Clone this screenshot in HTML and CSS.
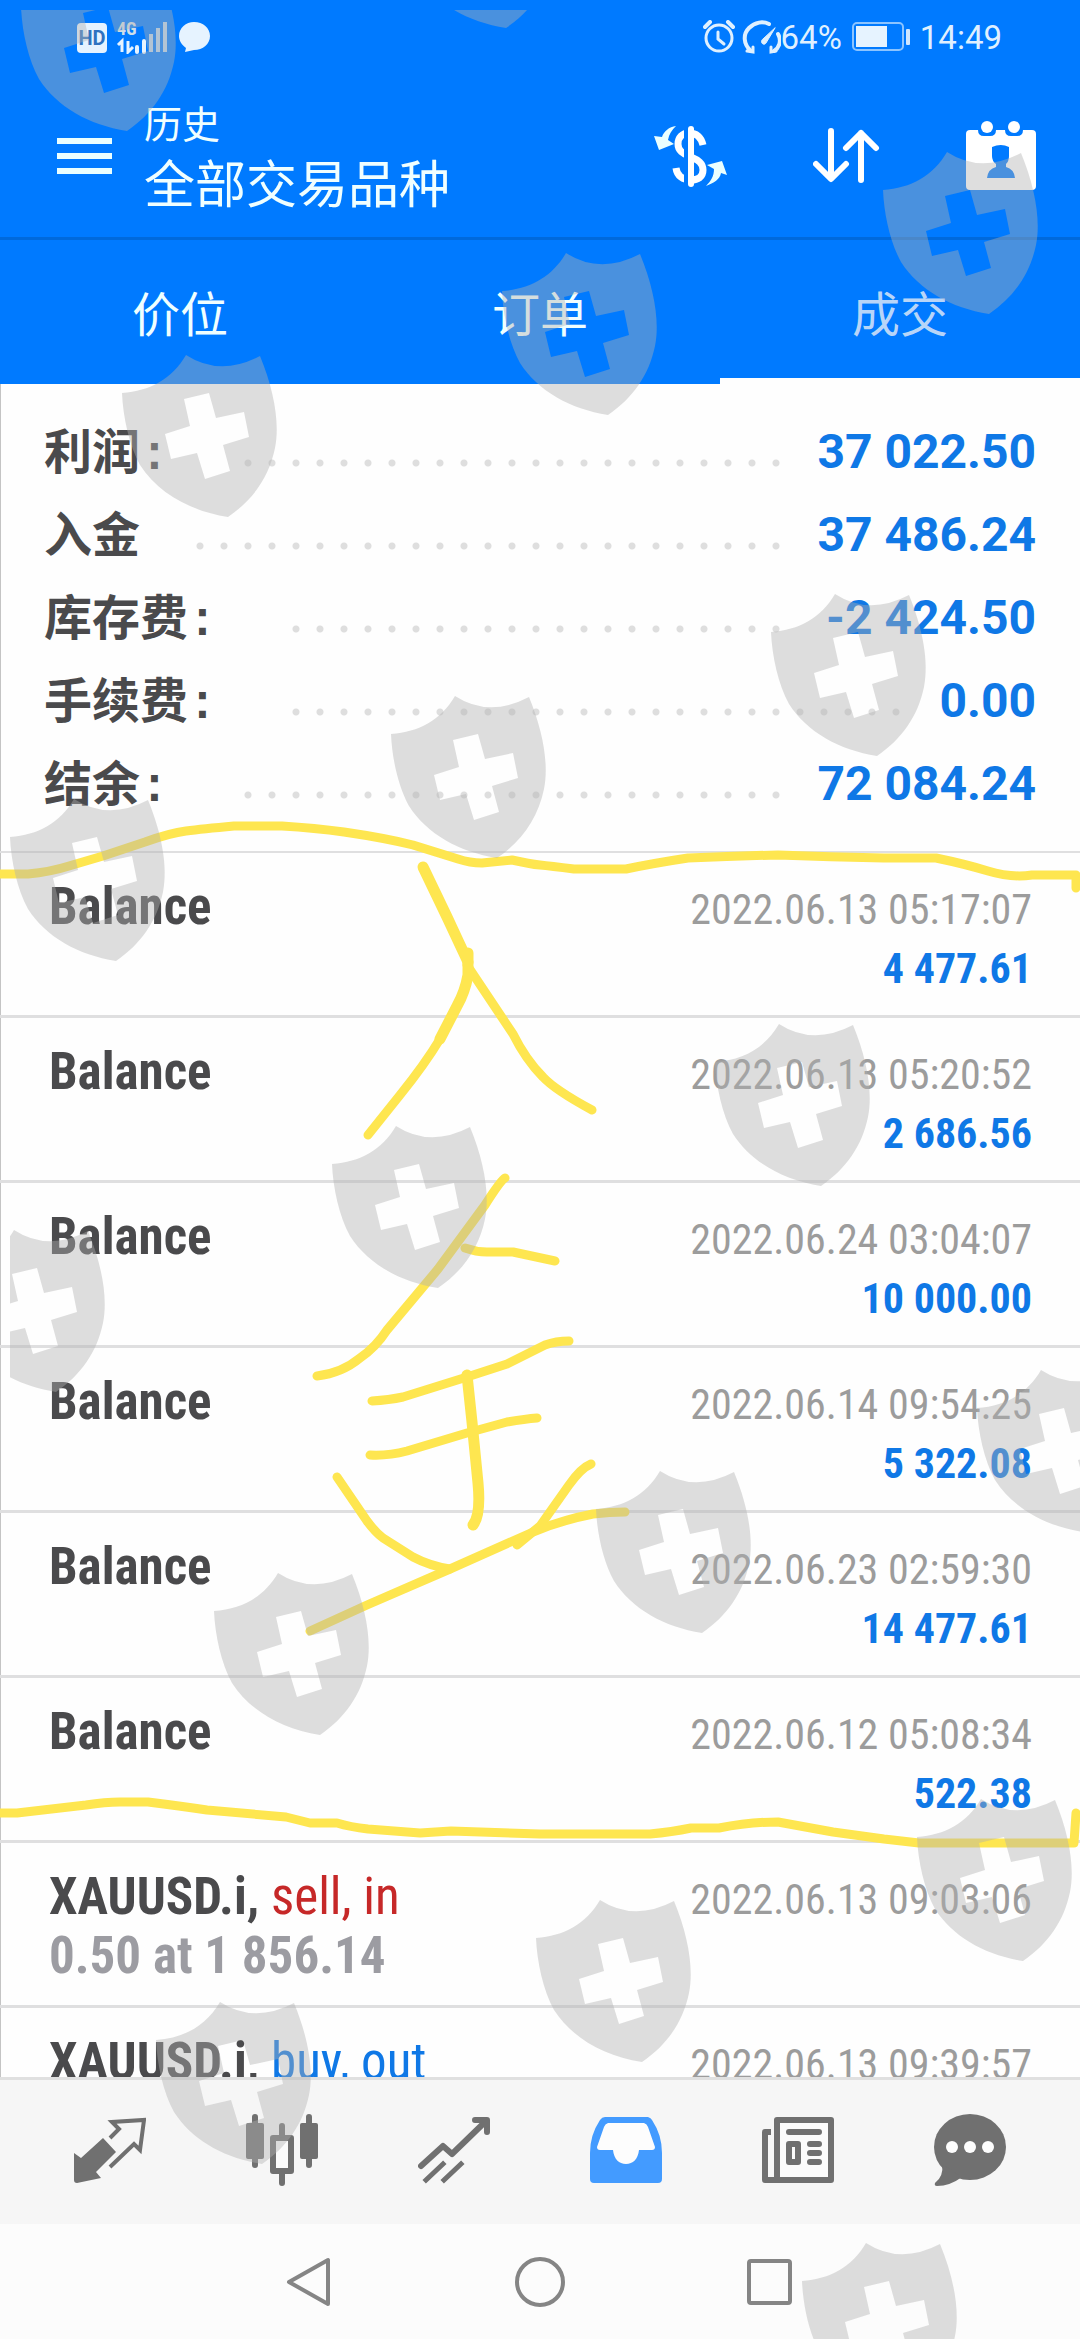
FILE: index.html
```html
<!DOCTYPE html>
<html lang="zh-CN">
<head>
<meta charset="utf-8">
<meta name="viewport" content="width=device-width, initial-scale=1">
<title>历史</title>
<link rel="stylesheet" href="styles.css">
</head>
<body>
<div class="screen">
  <header class="top">
    <div class="status">
      <svg class="status-left" width="134" height="34" viewBox="0 0 134 34" aria-hidden="true">
        <rect x="1" y="3" width="30" height="30" rx="4" fill="#e6f3ff"/>
        <text x="16" y="25" text-anchor="middle" class="hd">HD</text>
        <text x="41" y="15" class="net">4G</text>
        <path d="M42 25l4-4v11M52 21v11l5-5" fill="none" stroke="#e6f3ff" stroke-width="3"/>
        <path d="M61 32v-5M68 32v-11" stroke="#e6f3ff" stroke-width="4" stroke-linecap="round"/>
        <path d="M75 32v-18M82 32v-24M89 32v-30" stroke="#b5d3ee" stroke-width="4"/>
        <path d="M118 2c9 0 16 6 16 14s-7 14-16 14l-9 2 1-4c-4-3-7-7-7-12 0-8 7-14 15-14z" fill="#e6f3ff"/>
      </svg>
      <div class="status-right">
        <svg width="78" height="34" viewBox="0 0 78 34" fill="none" stroke="#dff0ff" stroke-width="3" stroke-linecap="round" aria-hidden="true">
          <circle cx="16" cy="18" r="13"/>
          <path d="M15 12v7l6 5"/>
          <path d="M2 7l5-5M25 2l5 5" stroke-width="4"/>
          <path d="M48 31C40 24 40 14 46 8C52 2 60 1 66 4M75 14C79 21 76 28 71 31" stroke-width="4"/>
          <path d="M44 31L50 32V27M68 27V32L73 31"/>
          <path d="M72 8L63 23c-2 3-6 0-4-3z" fill="#dff0ff" stroke-width="1"/>
        </svg>
        <span>64%</span>
        <svg class="battery" width="58" height="30" viewBox="0 0 58 30" aria-hidden="true">
          <rect x="1" y="1" width="50" height="27" rx="4" fill="none" stroke="#8cc4ff" stroke-width="2"/>
          <rect x="4" y="4" width="31" height="21" fill="#e6f3ff"/>
          <rect x="54" y="7" width="4" height="16" rx="1" fill="#cfe6ff"/>
        </svg>
        <span>14:49</span>
      </div>
    </div>
    <div class="appbar">
      <button class="icon-button" aria-label="菜单">
        <svg width="55" height="36" viewBox="0 0 55 36" stroke="#eaffff" stroke-width="6"><path d="M0 3h55M0 18h55M0 33h55"/></svg>
      </button>
      <div class="titles">
        <p class="section">历史</p>
        <h1 class="title">全部交易品种</h1>
      </div>
      <div class="actions">
        <button class="icon-button" aria-label="货币">
          <svg width="73" height="66" viewBox="0 0 73 66">
            <path d="M49 22C47 14 42 10 35 10C28 10 24 15 24 21C24 29 31 31 37 34C44 37 49 40 49 47C49 54 44 57 37 57C29 57 23 53 22 45" fill="none" stroke="#fff" stroke-width="7"/>
            <path d="M32 3v60" stroke="#007aff" stroke-width="4"/>
            <path d="M37 6v55" stroke="#fff" stroke-width="6" stroke-linecap="round"/>
            <path d="M22 3C15 4 10 8 8 14L0 13L5 27L20 21L14 17C15 11 18 7 22 3ZM52 63C60 60 66 56 67 50L73 52L68 38L53 42L60 46C60 53 57 58 52 63Z" fill="#eaffff"/>
          </svg>
        </button>
        <button class="icon-button" aria-label="排序">
          <svg width="67" height="55" viewBox="0 0 67 55" fill="none" stroke="#fff" stroke-width="6" stroke-linecap="round" stroke-linejoin="round"><path d="M18 3V50M3 36L18 51L33 36M48 52V5M33 20L48 5L63 20"/></svg>
        </button>
        <button class="icon-button" aria-label="日期">
          <svg width="70" height="70" viewBox="0 0 70 70">
            <rect y="9" width="70" height="60" rx="4" fill="#fff"/>
            <path d="M12 5v4q0 6 6 6h6q6 0 6-6V5zM39 5v4q0 6 6 6h6q6 0 6-6V5z" fill="#007aff"/>
            <circle cx="21" cy="6" r="6" fill="#fff"/><circle cx="48" cy="6" r="6" fill="#fff"/>
            <path d="M26 26Q35 22 43 26V35Q43 40 40 43V46Q48 48 49 57H21Q22 48 30 46V43Q26 40 26 35Z" fill="#007aff"/>
          </svg>
        </button>
      </div>
    </div>
    <nav class="tabs">
      <a class="tab" href="#positions">价位</a>
      <a class="tab" href="#orders">订单</a>
      <a class="tab tab-active" href="#deals" aria-current="page">成交</a>
    </nav>
  </header>

  <main class="content">
    <dl class="summary">
      <div class="sum-row"><dt class="label label-mid">利润:</dt><dd class="value">37 022.50</dd></div>
      <div class="sum-row"><dt class="label label-short">入金</dt><dd class="value">37 486.24</dd></div>
      <div class="sum-row"><dt class="label label-long">库存费:</dt><dd class="value">-2 424.50</dd></div>
      <div class="sum-row"><dt class="label label-long">手续费:</dt><dd class="value value-short">0.00</dd></div>
      <div class="sum-row"><dt class="label label-mid">结余:</dt><dd class="value">72 084.24</dd></div>
    </dl>
    <ul class="deals">
      <li class="deal"><div class="name">Balance</div><div class="info"><time>2022.06.13 05:17:07</time><b>4 477.61</b></div></li>
      <li class="deal"><div class="name">Balance</div><div class="info"><time>2022.06.13 05:20:52</time><b>2 686.56</b></div></li>
      <li class="deal"><div class="name">Balance</div><div class="info"><time>2022.06.24 03:04:07</time><b>10 000.00</b></div></li>
      <li class="deal"><div class="name">Balance</div><div class="info"><time>2022.06.14 09:54:25</time><b>5 322.08</b></div></li>
      <li class="deal"><div class="name">Balance</div><div class="info"><time>2022.06.23 02:59:30</time><b>14 477.61</b></div></li>
      <li class="deal"><div class="name">Balance</div><div class="info"><time>2022.06.12 05:08:34</time><b>522.38</b></div></li>
      <li class="deal"><div class="name">XAUUSD.i, <span class="sell">sell, in</span><p class="volume">0.50 at 1 856.14</p></div><div class="info"><time>2022.06.13 09:03:06</time></div></li>
      <li class="deal"><div class="name">XAUUSD.i, <span class="buy">buy, out</span></div><div class="info"><time>2022.06.13 09:39:57</time></div></li>
    </ul>
  </main>

  <nav class="dock">
    <a class="dock-item" href="#quotes" aria-label="行情"><svg width="72" height="72" viewBox="0 -3 72 72"><path d="M29 21L42 35L22 55L27 61L3 66Q0 66 0 63V36L7 41Z" fill="currentColor"/><path d="M36 21L45 12L38 5L70 3L66 33L60 27L36 50" fill="none" stroke="currentColor" stroke-width="4"/></svg></a>
    <a class="dock-item" href="#charts" aria-label="图表"><svg width="72" height="72" viewBox="0 0 72 72"><rect y="9" width="18" height="36" rx="2" fill="currentColor"/><rect x="54" y="9" width="18" height="36" rx="2" fill="currentColor"/><rect x="27" y="24" width="18" height="33" fill="#fbfbfb" stroke="currentColor" stroke-width="6" stroke-linejoin="round"/><path d="M9 3v48M63 3v48M36 12v9M36 60v9" stroke="currentColor" stroke-width="6" stroke-linecap="round"/></svg></a>
    <a class="dock-item" href="#trade" aria-label="交易"><svg width="72" height="72" viewBox="0 -3 72 72" fill="none" stroke="currentColor" stroke-width="6" stroke-linecap="round" stroke-linejoin="round"><path d="M3 49L25 29L34 37L67 5M57 3H69V15"/><path d="M8 63L25 47M26 63L43 47" stroke-linecap="square" stroke-width="5"/></svg></a>
    <a class="dock-item dock-active" href="#history" aria-label="历史"><svg width="72" height="72" viewBox="0 -3 72 72"><path d="M15 0H58Q61 1 62 3Q72 18 72 36V62Q72 66 68 66H4Q0 66 0 62V36Q0 18 10 3Q12 0 15 0Z" fill="currentColor"/><path d="M18 6H54Q57 7 58 10L65 30Q65 33 62 33H49C48 42 43 47 36 47S24 42 23 33H10Q7 33 7 30L14 10Q15 7 18 6Z" fill="#fdfdfd"/></svg></a>
    <a class="dock-item" href="#news" aria-label="新闻"><svg width="72" height="72" viewBox="0 -3 72 72" fill="none" stroke="currentColor" stroke-width="6" stroke-linejoin="round"><rect x="15" y="3" width="54" height="60" fill="#fbfbfb"/><path d="M9 15H3V63H15"/><path d="M27 15H57M48 27H57M48 36H57M48 45H57" stroke-linecap="round"/><rect x="27" y="27" width="9" height="18"/></svg></a>
    <a class="dock-item" href="#chat" aria-label="消息"><svg width="72" height="72" viewBox="0 0 72 72"><ellipse cx="36" cy="33" rx="36" ry="33" fill="currentColor"/><path d="M8 50Q10 62 1 69Q0 72 3 72Q16 72 28 63Z" fill="currentColor"/><g fill="#fdfdfd"><circle cx="18" cy="33" r="6"/><circle cx="36" cy="33" r="6"/><circle cx="54" cy="33" r="6"/></g></svg></a>
  </nav>

  <div class="sysnav">
    <button class="icon-button" aria-label="返回"><svg width="50" height="50" viewBox="0 0 50 50"><path d="M44 3V47L5 25Z"/></svg></button>
    <button class="icon-button" aria-label="主屏幕"><svg width="50" height="50" viewBox="0 0 50 50"><circle cx="25" cy="25" r="23"/></svg></button>
    <button class="icon-button" aria-label="最近任务"><svg width="50" height="50" viewBox="0 0 50 50"><rect x="3" y="4" width="41" height="42" rx="2"/></svg></button>
  </div>

  <svg class="overlay" viewBox="0 0 1080 2339" aria-hidden="true">
    <defs>
      <path id="shield" fill-rule="evenodd" d="M64 0Q98 22 138 1C152 35 158 68 153 93C147 122 131 145 106 162C68 156 36 138 18 110C7 90 1 62 0 38C28 36 50 24 64 0ZM62 44L68 71L43 79L49 104L75 98L83 124L108 116L101 90L127 82L122 57L94 63L87 38Z"/>
      <clipPath id="safe-area"><rect x="10" y="10" width="1070" height="2329"/></clipPath>
    </defs>
    <g class="marker">
      <path d="M0 874H28Q50 872 69 866L103 856L145 842Q170 833 186 831T234 826H282Q315 828 344 832Q385 838 413 845L458 859Q470 863 482 863L512 860Q530 864 540 865T574 869H626Q655 863 688 858Q735 856 778 855Q830 857 884 858H936Q965 864 988 871T1032 875H1076V888"/>
      <path d="M0 1813H17L86 1805Q105 1802 120 1802H148Q180 1806 207 1810L286 1817L310 1823H337Q350 1827 368 1829L420 1833L451 1831L540 1834H650Q672 1832 691 1828H719Q750 1822 778 1822Q805 1827 833 1832L884 1839L919 1843H1074L1076 1813"/>
      <path class="wide" d="M423 867L447 917L468 962"/>
      <path d="M467 965L513 1034Q526 1060 543 1077Q555 1090 592 1110"/>
      <path class="wide" d="M468 953V975Q465 992 457 1006L440 1039"/>
      <path d="M440 1039Q425 1064 400 1095L368 1135"/>
      <path d="M505 1178Q501 1180 485 1205L438 1269L387 1330Q376 1347 360 1358Q342 1373 317 1376"/>
      <path d="M465 1248Q476 1252 487 1252H513L555 1261"/>
      <path d="M372 1401Q389 1400 403 1397L467 1377L507 1364L545 1345Q556 1341 569 1341"/>
      <path class="wide" d="M467 1375L472 1422L478 1483Q481 1515 473 1525"/>
      <path d="M370 1455Q388 1456 407 1451L467 1433L507 1422Q525 1419 537 1418"/>
      <path d="M337 1477L367 1521Q375 1532 383 1538L413 1557Q430 1566 450 1569"/>
      <path d="M591 1464Q581 1468 569 1485L540 1526L517 1545"/>
      <path d="M310 1631L367 1605L450 1569L533 1532Q562 1520 593 1514Q610 1512 625 1512"/>
    </g>
    <g class="watermark" clip-path="url(#safe-area)">
      <use href="#shield" x="21" y="-31"/><use href="#shield" x="400" y="-134"/>
      <use href="#shield" x="883" y="152"/><use href="#shield" x="502" y="253"/>
      <use href="#shield" x="122" y="355"/><use href="#shield" x="771" y="594"/>
      <use href="#shield" x="391" y="696"/><use href="#shield" x="10" y="799"/>
      <use href="#shield" x="715" y="1024"/><use href="#shield" x="332" y="1126"/>
      <use href="#shield" x="-50" y="1230"/><use href="#shield" x="977" y="1370"/>
      <use href="#shield" x="596" y="1471"/><use href="#shield" x="214" y="1573"/>
      <use href="#shield" x="917" y="1799"/><use href="#shield" x="536" y="1900"/>
      <use href="#shield" x="156" y="2002"/><use href="#shield" x="802" y="2243"/>
    </g>
  </svg>
</div>
</body>
</html>
```
FILE: styles.css
```css
* { box-sizing: border-box; }

body, p, h1, dl, dd, ul { margin: 0; padding: 0; }

body {
  background: #fefefe;
  font-family: Roboto, "Noto Sans CJK SC", sans-serif;
}

a { color: inherit; text-decoration: none; }

.screen {
  position: relative;
  display: flex;
  flex-direction: column;
  height: 100vh;
  overflow: hidden;
  box-shadow: inset 1px 0 #c4c4c4;
}

.icon-button {
  display: flex;
  padding: 0;
  border: 0;
  background: none;
}

/* header */
.top {
  flex: none;
  background: #007aff;
  color: #f0ffff;
}

.status {
  display: flex;
  justify-content: space-between;
  align-items: center;
  height: 74px;
  padding: 0 78px 0 76px;
  color: #dff0ff;
  font-size: 33px;
}

.status-right { display: flex; align-items: center; }
.battery { margin: 0 10px; }
.hd { font: 700 20px Roboto, sans-serif; fill: #2f72c0; }
.net { font: 700 18px "Roboto Condensed", Roboto, sans-serif; fill: #d0dfe8; }

.appbar {
  display: flex;
  align-items: center;
  gap: 32px;
  height: 163px;
  padding: 0 44px 0 57px;
}

.titles { flex: 1; padding-top: 10px; }
.section { font-size: 38px; line-height: 50px; }
.title { font-size: 51px; font-weight: 400; line-height: 72px; }
.actions { display: flex; align-items: center; gap: 86px; }

.tabs {
  display: grid;
  grid-template-columns: repeat(3, 1fr);
  border-top: 3px solid #0069db;
}

.tab {
  height: 144px;
  padding-top: 4px;
  border-bottom: 6px solid transparent;
  font-size: 48px;
  line-height: 144px;
  text-align: center;
}

.tab-active { border-color: #fefefe; color: #b8d5f8; }

/* account summary */
.content { flex: 1; min-height: 0; overflow: hidden; }

.summary {
  padding: 26px 44px;
  border-bottom: 2px solid #dfdfe0;
}

.sum-row {
  display: flex;
  align-items: center;
  height: 83px;
}

.label {
  padding-top: 10px;
  color: #4a4a4c;
  font: 700 48px/73px "Liberation Mono", "Noto Sans CJK SC", monospace;
}

.label-short { width: 144px; }
.label-mid { width: 192px; }
.label-long { width: 240px; }

/* dotted leader between a label and its value */
.sum-row::before {
  content: "";
  order: 1;
  flex: 1;
  height: 24px;
  margin-top: 22px;
  background: radial-gradient(circle, #dedede 3px, transparent 4px) 0 0 / 24px 24px repeat-x;
}

.value {
  order: 2;
  width: 248px;
  color: #0f78e6;
  font-size: 48px;
  font-weight: 700;
  text-align: right;
}

.value-short { width: 128px; }

/* deals */
.deals { list-style: none; }

.deal {
  display: flex;
  justify-content: space-between;
  height: 165px;
  padding: 24px 48px 0 49px;
  border-bottom: 3px solid #dfdfe0;
  font-family: "Roboto Condensed", "Liberation Sans Narrow", Roboto, sans-serif;
}

.name {
  color: #4a4a4c;
  font-size: 51px;
  font-weight: 700;
  line-height: 59px;
}

.name span { font-weight: 400; }
.sell { color: #c62828; }
.buy { color: #0f78e6; }
.volume { color: #9c9ca2; }

.info {
  display: flex;
  flex-direction: column;
  align-items: flex-end;
  color: #9c9c9c;
  font-size: 42px;
  line-height: 59px;
  padding-top: 3px;
}

.info b { color: #0f78e6; }

/* bottom bars */
.dock {
  display: grid;
  grid-template-columns: repeat(6, 1fr);
  flex: none;
  align-items: center;
  height: 147px;
  padding: 0 24px 4px;
  border-top: 3px solid #e0e0e0;
  background: #f6f6f6;
  color: #707070;
}

.dock-item { display: flex; justify-content: center; }
.dock-active { color: #439bff; }

.sysnav {
  display: grid;
  grid-template-columns: repeat(3, 1fr);
  flex: none;
  align-items: center;
  justify-items: center;
  height: 115px;
  padding: 0 194px;
  background: #fcfcfc;
  fill: none;
  stroke: #858585;
  stroke-width: 4px;
  stroke-linejoin: round;
}

/* pen marks and watermark lie over the whole screen */
.overlay {
  position: absolute;
  top: 0;
  left: 0;
  width: 100%;
  pointer-events: none;
}

.marker {
  fill: none;
  stroke: #fee650;
  stroke-width: 9px;
  stroke-linecap: round;
  stroke-linejoin: round;
}

.wide { stroke-width: 11px; }
.watermark { fill: rgb(176 176 176 / 42%); }
```
